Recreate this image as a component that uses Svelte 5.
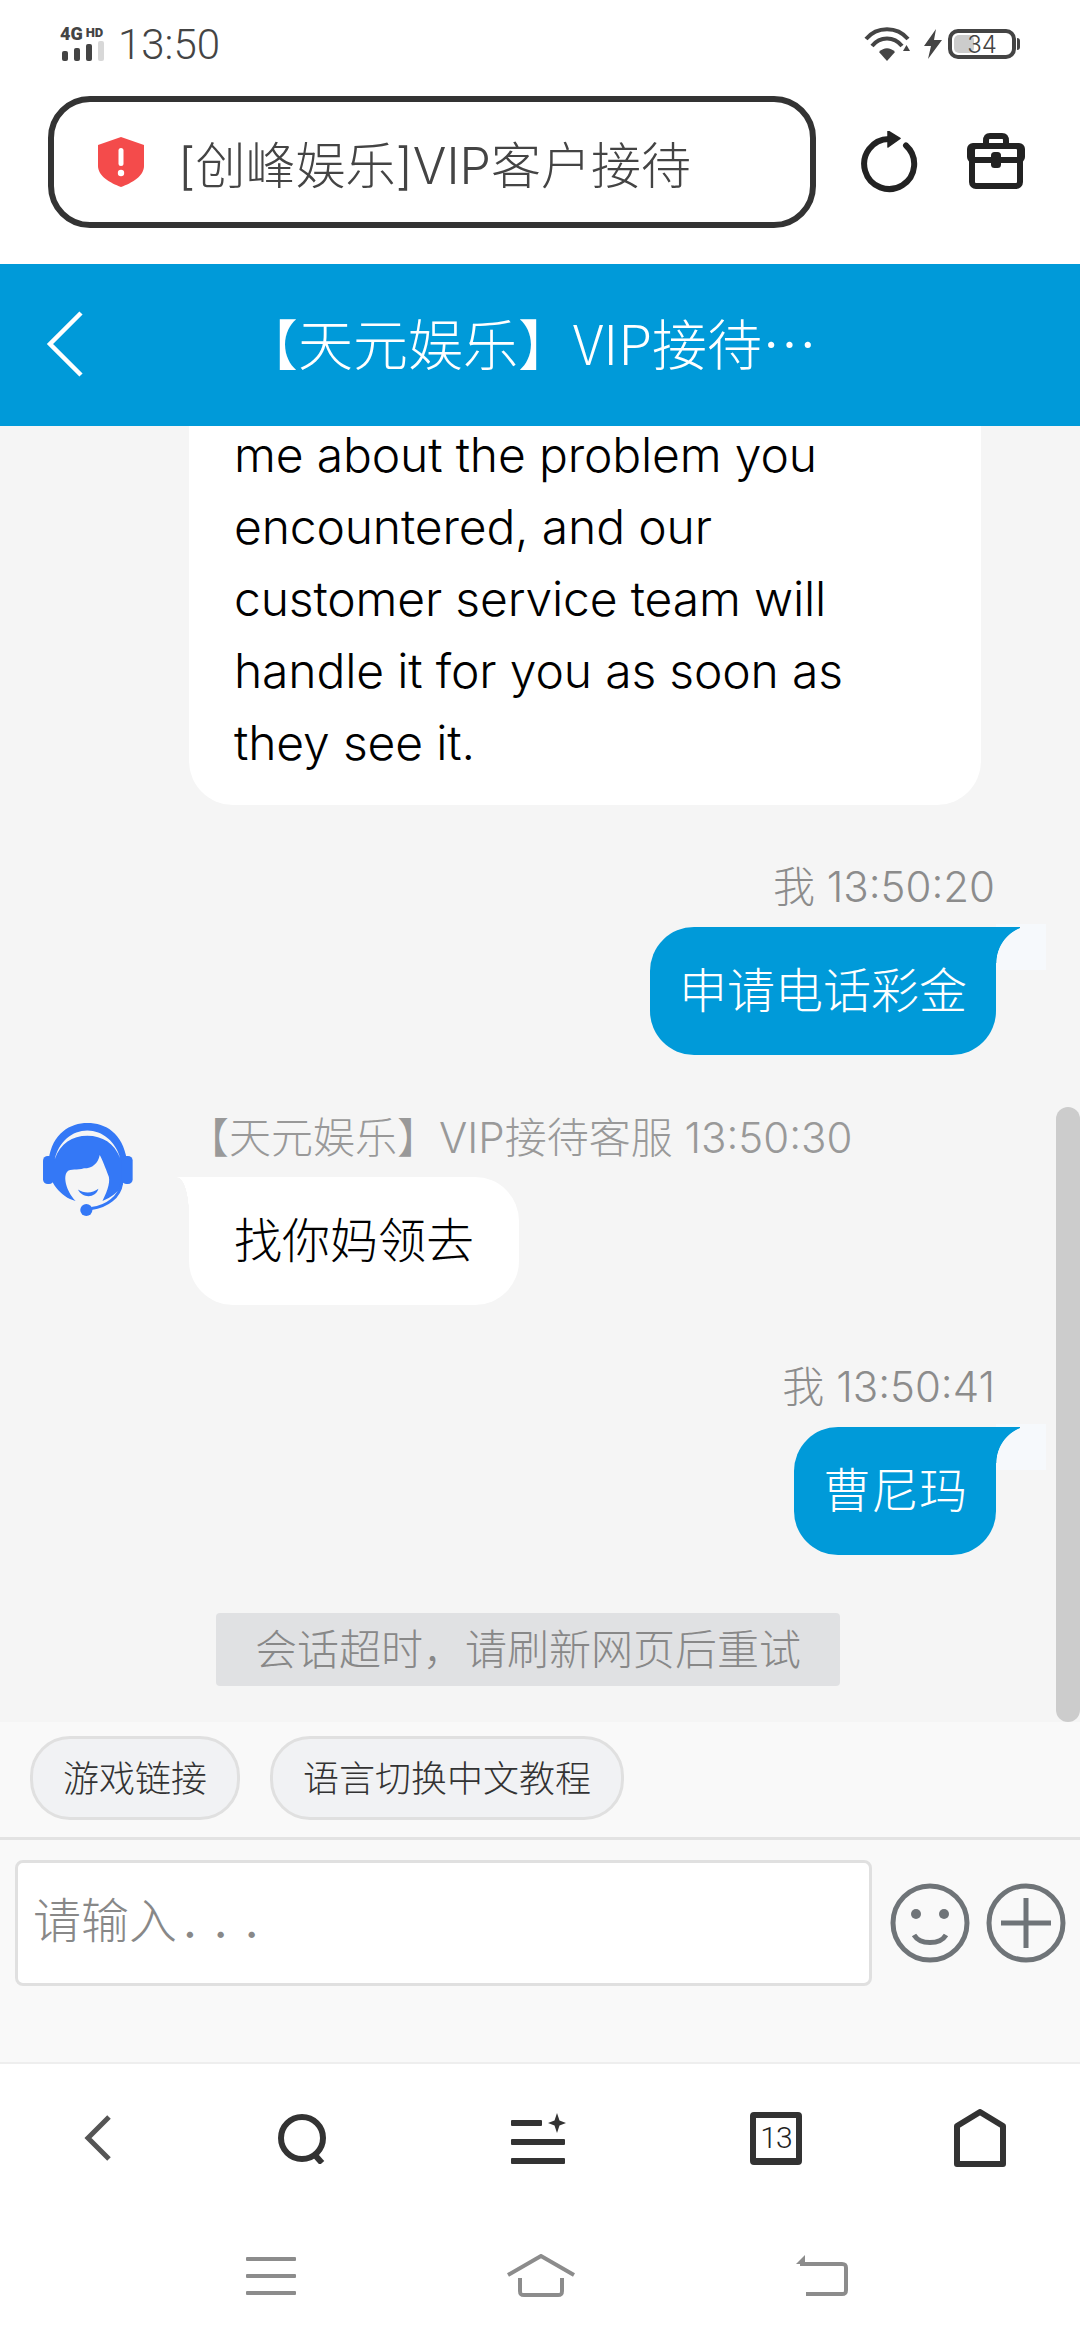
<script lang="ts">
  const navTabs = ['back', 'search', 'menu', 'tabs', 'home'];
</script>

<div class="page">
  <div class="status">
    <div class="status-left">
      <div class="signal">
        <div class="net"><span class="net-4g">4G</span><span class="net-hd">HD</span></div>
        <div class="bars"><i></i><i></i><i></i><i class="off"></i></div>
      </div>
      <span class="clock">13:50</span>
    </div>
    <div class="status-right">
      <svg width="47" height="34" viewBox="0 0 47 34" fill="none" stroke="#444" stroke-width="4">
        <path d="M2 12C13 -1 33 -1 44 12" />
        <path d="M8 19C16 9 30 9 38 19" />
        <path d="M15 25C20 20 26 20 31 25L23 34Z" fill="#444" stroke="none" />
        <path d="M42.500 18L46 24H39Z" fill="#444" stroke="none" />
      </svg>
      <svg class="bolt" width="18" height="30" viewBox="0 0 18 30"><path d="M12 0L0 17H7L4 30L18 11H10Z" fill="#444" /></svg>
      <div class="battery">
        <div class="battery-fill"></div>
        <span>34</span>
      </div>
      <div class="battery-cap"></div>
    </div>
  </div>

  <div class="browser-bar">
    <div class="address">
      <svg width="46" height="50" viewBox="0 0 46 50">
        <path d="M23 0L46 8V29C46 39 34 46 23 50C12 46 0 39 0 29V8Z" fill="#f44b4b" />
        <rect x="20.500" y="11" width="5" height="18" rx="2.500" fill="#fff" />
        <circle cx="23" cy="36" r="3.200" fill="#fff" />
      </svg>
      <span>[创峰娱乐]VIP客户接待</span>
    </div>
    <svg class="reload" width="60" height="64" viewBox="0 0 60 64" fill="none">
      <path d="M31 8A25 25 0 1 0 48 14.500" stroke="#222" stroke-width="6" stroke-linecap="round" />
      <path d="M30 0L42 7.500L30 16Z" fill="#222" stroke="#222" stroke-width="1.500" stroke-linejoin="round" />
    </svg>
    <svg class="tools" width="58" height="56" viewBox="0 0 58 56" fill="none" stroke="#222" stroke-width="6" stroke-linejoin="round">
      <path d="M19 13V8C19 5 20 3 23 3H35C38 3 39 5 39 8V13" />
      <rect x="5" y="13" width="48" height="40" rx="4" />
      <rect x="3" y="13" width="52" height="14" rx="3" />
      <rect x="24" y="19" width="10" height="16" rx="3.500" fill="#222" stroke="none" />
    </svg>
  </div>

  <header class="title-bar">
    <svg class="title-back" width="38" height="68" viewBox="0 0 38 68" fill="none">
      <path d="M35 3L4 34L35 65" stroke="#fff" stroke-width="4.500" />
    </svg>
    <h1>【天元娱乐】VIP接待…</h1>
  </header>

  <main class="chat">
    <div class="msg in clipped">
      <div class="bubble">me about the problem you encountered, and our customer service team will handle it for you as soon as they see it.</div>
    </div>

    <div class="msg out">
      <div class="meta">我 13:50:20</div>
      <div class="bubble">申请电话彩金</div>
    </div>

    <div class="msg in">
      <svg class="avatar" width="90" height="94" viewBox="68 70 268 280" fill="#3478f6">
        <path d="M85 180C95 100 150 70 200 70C255 70 305 100 318 180V200C318 240 300 280 245 302C262 270 270 240 262 225C255 205 245 180 237 165C232 190 215 205 190 205C170 212 150 205 140 215C128 228 135 270 165 302C120 290 85 245 85 200Z" />
        <path d="M103 178C115 125 155 92 200 92C245 92 285 125 298 175C280 130 245 108 200 108C155 108 120 130 103 178Z" fill="#f5f5f5" />
        <rect x="68" y="168" width="32" height="84" rx="14" />
        <rect x="303" y="168" width="32" height="84" rx="14" />
        <path d="M172 268C190 280 215 280 233 266C225 295 185 295 172 268Z" />
        <path d="M302 250C296 290 260 318 212 325" fill="none" stroke="#3478f6" stroke-width="9" />
        <circle cx="197" cy="329" r="18" />
      </svg>
      <div class="meta">【天元娱乐】VIP接待客服 13:50:30</div>
      <div class="bubble">找你妈领去</div>
    </div>

    <div class="msg out">
      <div class="meta">我 13:50:41</div>
      <div class="bubble">曹尼玛</div>
    </div>

    <div class="notice">会话超时，请刷新网页后重试</div>
    <div class="scrollbar"></div>
  </main>

  <section class="composer">
    <div class="chips">
      <button>游戏链接</button>
      <button>语言切换中文教程</button>
    </div>
    <div class="input-row">
      <div class="input">请输入<span class="dots">...</span></div>
      <svg width="80" height="80" viewBox="0 0 80 80" fill="none" stroke="#6f7478" stroke-width="5">
        <circle cx="40" cy="40" r="37" />
        <circle cx="26" cy="31" r="5" fill="#6f7478" stroke="none" />
        <circle cx="54" cy="31" r="5" fill="#6f7478" stroke="none" />
        <path d="M24 52C30 62 50 62 56 52" />
      </svg>
      <svg width="80" height="80" viewBox="0 0 80 80" fill="none" stroke="#6f7478" stroke-width="5">
        <circle cx="40" cy="40" r="37" />
        <path d="M15 40H65M40 15V65" />
      </svg>
    </div>
  </section>

  <nav class="browser-nav">
    {#each navTabs as tab}
      <div class="nav-item">
        {#if tab === 'back'}
          <svg width="28" height="46" viewBox="0 0 28 46" fill="none"><path d="M25 2L4 23L25 44" stroke="#555" stroke-width="5" /></svg>
        {:else if tab === 'search'}
          <svg width="50" height="52" viewBox="0 0 50 52" fill="none" stroke="#333" stroke-width="6">
            <circle cx="24" cy="26" r="21" />
            <path d="M36 42L44 51" />
          </svg>
        {:else if tab === 'menu'}
          <svg width="56" height="51" viewBox="0 0 56 51" fill="#333">
            <rect x="0" y="7" width="31" height="6" rx="1" />
            <rect x="0" y="26" width="54" height="6" rx="1" />
            <rect x="0" y="45" width="54" height="6" rx="1" />
            <path d="M46 0L48.500 7.500L55 10L48.500 12.500L46 20L43.500 12.500L37 10L43.500 7.500Z" />
          </svg>
        {:else if tab === 'tabs'}
          <div class="tab-count">13</div>
        {:else}
          <svg width="52" height="58" viewBox="0 0 52 58" fill="none"><path d="M3 55V17L26 3L49 17V55Z" stroke="#333" stroke-width="6" stroke-linejoin="round" /></svg>
        {/if}
      </div>
    {/each}
  </nav>

  <div class="system-nav">
    <svg width="50" height="38" viewBox="0 0 50 38" fill="#8c8c8c">
      <rect y="0" width="50" height="4" rx="1" />
      <rect y="17" width="50" height="4" rx="1" />
      <rect y="34" width="50" height="4" rx="1" />
    </svg>
    <svg class="sys-home" width="70" height="44" viewBox="0 0 70 44" fill="none" stroke="#8c8c8c" stroke-width="4">
      <path d="M2 21L35 2L68 21" />
      <path d="M14 24V37C14 40 15 41 18 41H52C55 41 56 40 56 37V24" />
    </svg>
    <svg width="54" height="42" viewBox="0 0 54 42" fill="none" stroke="#8c8c8c" stroke-width="4">
      <path d="M4 9H46C49 9 50 10 50 13V35C50 38 49 39 46 39H10" />
      <path d="M0 9L9 0V9Z" fill="#8c8c8c" stroke="none" />
    </svg>
  </div>
</div>

<style>
  :global(body) {
    margin: 0;
    background: #fff;
  }

  .page {
    width: 1080px;
    height: 2340px;
    display: flex;
    flex-direction: column;
    overflow: hidden;
    font-family: Inter, "Noto Sans CJK SC", sans-serif;
    font-weight: 300;
    color: #000;
  }

  /* Status bar */
  .status {
    height: 96px;
    padding: 0 60px 8px 60px;
    box-sizing: border-box;
    display: flex;
    align-items: center;
    justify-content: space-between;
    flex: none;
  }

  .status-left,
  .status-right {
    display: flex;
    align-items: center;
  }

  .signal {
    width: 48px;
    margin-right: 10px;
  }

  .net {
    display: flex;
    align-items: flex-start;
    height: 14px;
    color: #444;
    font-family: Roboto, sans-serif;
    font-weight: 900;
    line-height: 14px;
  }

  .net-4g {
    font-size: 18px;
  }

  .net-hd {
    font-size: 13px;
    line-height: 11px;
    margin-left: 3px;
  }

  .bars {
    display: flex;
    align-items: flex-end;
    gap: 6px;
    margin: 0 0 0 2px;
    height: 20px;
  }

  .bars i {
    width: 6px;
    height: 10px;
    background: #444;
    border-radius: 2px;
  }

  .bars i:nth-child(2) {
    height: 13px;
  }

  .bars i:nth-child(3) {
    height: 17px;
  }

  .bars i.off {
    height: 20px;
    background: #d8d8d8;
  }

  .clock {
    font-family: Roboto, sans-serif;
    font-size: 42px;
    font-weight: 300;
    color: #444;
  }

  .bolt {
    margin: 0 6px 0 13px;
  }

  .battery {
    position: relative;
    width: 68px;
    height: 30px;
    border: 4px solid #444;
    border-radius: 10px;
    box-sizing: border-box;
    display: flex;
    align-items: center;
    justify-content: center;
    font-size: 24px;
    color: #444;
  }

  .battery span {
    position: relative;
  }

  .battery-fill {
    position: absolute;
    left: 2px;
    top: 2px;
    bottom: 2px;
    width: 20px;
    background: #ccc;
    border-radius: 5px;
  }

  .battery-cap {
    width: 3px;
    height: 12px;
    margin-left: 1px;
    background: #444;
    border-radius: 0 3px 3px 0;
  }

  /* Browser address bar */
  .browser-bar {
    height: 168px;
    flex: none;
    display: flex;
    align-items: flex-start;
    padding-left: 48px;
    box-sizing: border-box;
  }

  .address {
    width: 768px;
    height: 132px;
    box-sizing: border-box;
    border: 6px solid #333;
    border-radius: 42px;
    display: flex;
    align-items: center;
    padding-left: 44px;
    gap: 34px;
    font-size: 50px;
    color: #444;
    white-space: nowrap;
  }

  .reload {
    margin: 35px 0 0 42px;
  }

  .tools {
    margin: 37px 0 0 49px;
  }

  /* Page title */
  .title-bar {
    position: relative;
    height: 162px;
    flex: none;
    background: #009ad9;
    display: flex;
    align-items: center;
    justify-content: center;
    color: #fff;
  }

  .title-back {
    position: absolute;
    left: 46px;
    top: 46px;
  }

  .title-bar h1 {
    margin: 0 20px 9px 0;
    font-family: "Noto Sans CJK SC", sans-serif;
    font-size: 55px;
    font-weight: 300;
    white-space: nowrap;
  }

  /* Chat */
  .chat {
    position: relative;
    flex: none;
    height: 1296px;
    background: #f5f5f5;
    overflow: hidden;
    display: flex;
    flex-direction: column;
  }

  .msg {
    position: relative;
    display: flex;
    flex-direction: column;
    margin-top: 54px;
  }

  .msg.in {
    align-items: flex-start;
    padding-left: 189px;
    margin-top: 52px;
  }

  .msg.out {
    align-items: flex-end;
    padding-right: 84px;
  }

  .msg.clipped {
    margin-top: 0;
  }

  .meta {
    font-size: 42px;
    line-height: 56px;
    height: 56px;
    margin-bottom: 12px;
    color: #8c8c8c;
    white-space: nowrap;
  }

  .msg.out .meta {
    margin-right: 1px;
  }

  .msg.in .meta {
    margin: 3px 0 11px -2px;
    color: #999;
  }

  .bubble {
    position: relative;
    box-sizing: border-box;
    padding: 28px 45px;
    font-size: 48px;
    line-height: 72px;
    border-radius: 44px;
  }

  .msg.in .bubble {
    background: #fff;
    border-top-left-radius: 0;
  }

  .msg.in .bubble::before {
    content: '';
    position: absolute;
    left: -12px;
    top: 0;
    width: 12px;
    height: 36px;
    background: radial-gradient(ellipse 12px 36px at 0 100%, transparent 98%, #fff 100%);
  }

  .msg.out .bubble {
    background: #009ad9;
    color: #fff;
    padding: 28px 29px;
    border-top-right-radius: 0;
  }

  .msg.out .bubble::before {
    content: '';
    position: absolute;
    right: -50px;
    top: -3px;
    width: 50px;
    height: 46px;
    background: #f6f9fc;
  }

  .msg.out .bubble::after {
    content: '';
    position: absolute;
    right: -24px;
    top: 0;
    width: 24px;
    height: 36px;
    background: radial-gradient(circle 38px at 38px 36px, transparent 98%, #009ad9 100%);
  }

  .msg.clipped .bubble {
    width: 792px;
    padding: 0 120px 26px 45px;
    margin-top: -7px;
    border-top-right-radius: 0;
    letter-spacing: -0.15px;
  }

  .msg.clipped .bubble::before {
    display: none;
  }

  .avatar {
    position: absolute;
    left: 43px;
    top: 16px;
  }

  .notice {
    align-self: flex-start;
    margin: 58px 0 0 216px;
    width: 624px;
    height: 73px;
    background: #e0e1e3;
    border-radius: 4px;
    font-size: 42px;
    line-height: 73px;
    text-align: center;
    color: #888;
  }

  .scrollbar {
    position: absolute;
    right: 0;
    top: 681px;
    bottom: 0;
    width: 24px;
    background: #ccc;
    border-radius: 12px;
  }

  /* Composer */
  .composer {
    flex: none;
    height: 342px;
    box-sizing: border-box;
    background: #f9f9f9;
    border-bottom: 2px solid #eee;
  }

  .chips {
    display: flex;
    gap: 30px;
    height: 118px;
    padding: 14px 0 0 30px;
    box-sizing: border-box;
    border-bottom: 3px solid #e3e3e3;
  }

  .chips button {
    height: 84px;
    padding: 0 30px 5px;
    background: #f1f2f4;
    border: 3px solid #e0e0e0;
    border-radius: 40px;
    font: inherit;
    font-size: 36px;
    color: #333;
  }

  .input-row {
    display: flex;
    align-items: center;
    gap: 16px;
    padding: 20px 0 0 15px;
  }

  .input {
    flex: none;
    width: 857px;
    height: 126px;
    box-sizing: border-box;
    border: 3px solid #e0e0e0;
    border-radius: 8px;
    background: #fff;
    padding-left: 15px;
    font-size: 48px;
    line-height: 116px;
    color: #888;
    margin-right: 2px;
  }

  .dots {
    letter-spacing: 17px;
    margin-left: 6px;
    font-weight: 400;
  }

  .input-row svg {
    flex: none;
  }

  /* Browser nav */
  .browser-nav {
    flex: none;
    height: 148px;
    display: grid;
    grid-template-columns: 196px 214px 258px 216px 192px;
    align-items: center;
  }

  .nav-item {
    display: flex;
    justify-content: center;
  }

  .tab-count {
    width: 52px;
    height: 53px;
    box-sizing: border-box;
    border: 6px solid #333;
    border-bottom-width: 7px;
    border-radius: 4px;
    font-family: Roboto, sans-serif;
    font-size: 30px;
    font-weight: 300;
    line-height: 40px;
    text-align: center;
    color: #222;
    letter-spacing: -1px;
  }

  .system-nav {
    flex: none;
    height: 128px;
    display: flex;
    align-items: center;
    padding: 0 230px 0 246px;
    justify-content: space-between;
  }

  .sys-home {
    margin-right: 10px;
  }
</style>
